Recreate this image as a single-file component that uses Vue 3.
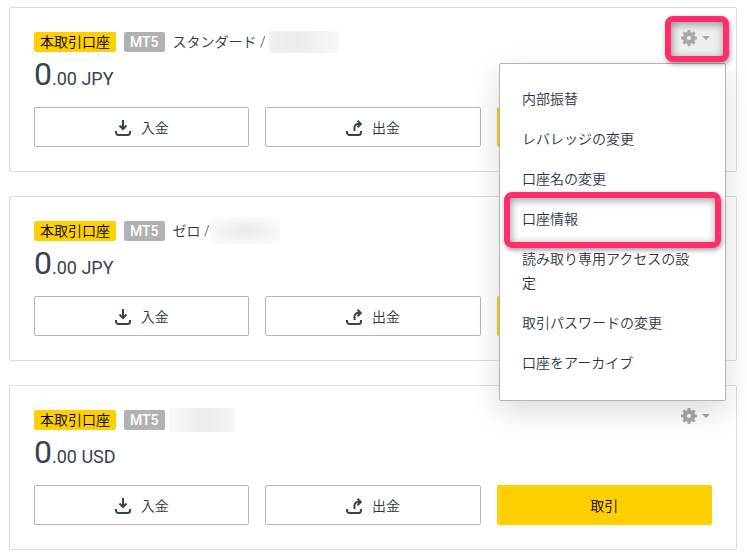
<script setup>
import { ref } from 'vue'

const accounts = [
  { id: 1, name: 'スタンダード /', currency: 'JPY', maskClass: 'mask-standard' },
  { id: 2, name: 'ゼロ /', currency: 'JPY', maskClass: 'mask-zero' },
  { id: 3, name: '', currency: 'USD', maskClass: 'mask-usd' },
]

const menuItems = [
  '内部振替',
  'レバレッジの変更',
  '口座名の変更',
  '口座情報',
  '読み取り専用アクセスの設定',
  '取引パスワードの変更',
  '口座をアーカイブ',
]

const openId = ref(1)
const marked = '口座情報'

function toggle(id) {
  openId.value = openId.value === id ? null : id
}
</script>

<template>
  <main class="accounts">
    <section v-for="account in accounts" :key="account.id" class="card">
      <div class="card-head">
        <span class="badge badge-real">本取引口座</span>
        <span class="badge badge-platform">MT5</span>
        <div class="account-name">
          <span v-if="account.name">{{ account.name }}</span>
          <span class="mask" :class="account.maskClass"></span>
        </div>

        <div class="settings" :class="{ open: openId === account.id }">
          <button
            class="settings-button"
            :class="{ marked: openId === account.id }"
            type="button"
            aria-label="設定"
            :aria-expanded="openId === account.id"
            @click="toggle(account.id)"
          >
            <svg class="gear" viewBox="0 0 16 16" aria-hidden="true">
              <path
                fill-rule="evenodd"
                d="M6.700 0h2.600l.4 2.200 1.200.5 1.900-1.300 1.800 1.800-1.300 1.900.5 1.200 2.200.4v2.600l-2.200.4-.5 1.200 1.300 1.900-1.800 1.800-1.900-1.300-1.200.5-.4 2.200H6.700l-.4-2.200-1.200-.5-1.900 1.300-1.800-1.800 1.300-1.900-.5-1.200L0 9.300V6.700l2.200-.4.5-1.200-1.300-1.900 1.800-1.800 1.900 1.300 1.200-.5zM8 5.900a2.100 2.100 0 1 0 0 4.200 2.100 2.100 0 0 0 0-4.200z"
              />
            </svg>
            <svg class="caret" viewBox="0 0 8 4" aria-hidden="true">
              <path d="M0 0h8L4 4z" />
            </svg>
          </button>

          <ul v-if="openId === account.id" class="menu">
            <li v-for="item in menuItems" :key="item">
              <a href="#" class="menu-link" :class="{ marked: item === marked }" @click.prevent>{{ item }}</a>
            </li>
          </ul>
        </div>
      </div>

      <div class="balance"><span class="balance-main">0</span>.00 {{ account.currency }}</div>

      <div class="actions">
        <button class="action" type="button">
          <svg class="action-icon" viewBox="0 0 16 17" aria-hidden="true">
            <path d="M8 1v9M4.500 6.500 8 10l3.500-3.500M1 12v1.500A2.500 2.500 0 0 0 3.500 16h9a2.500 2.500 0 0 0 2.500-2.500V12" />
          </svg>
          入金
        </button>
        <button class="action" type="button">
          <svg class="action-icon" viewBox="0 0 16 17" aria-hidden="true">
            <path d="M8.500 12V8.500A3.500 3.500 0 0 1 12 5h3M11.500 1.700 14.800 5l-3.300 3.300M1 12v1.500A2.500 2.500 0 0 0 3.500 16h9a2.500 2.500 0 0 0 2.500-2.500V12" />
          </svg>
          出金
        </button>
        <button class="action action-trade" type="button">取引</button>
      </div>
    </section>
  </main>
</template>

<style>
body {
  background: #fff;
}
</style>

<style scoped>
.accounts {
  display: flex;
  flex-direction: column;
  gap: 24px;
  padding: 7px 10px 6px 9px;
  font-family: Roboto, "Noto Sans CJK JP", sans-serif;
  font-size: 14px;
  font-weight: 400;
  line-height: 20px;
  color: #38424f;
}

.card {
  padding: 24px;
  border: 1px solid #dcdcdc;
  border-radius: 2px;
}

.card-head {
  display: flex;
  align-items: center;
  gap: 8px;
  height: 20px;
}

.badge {
  padding: 0 6px;
  border-radius: 2px;
  line-height: 20px;
  white-space: nowrap;
}

.badge-real {
  background: #ffcf01;
  color: #000;
  font-weight: 350;
}

.badge-platform {
  background: #b1b1b1;
  color: #fff;
  font-weight: 500;
}

.account-name,
.menu,
.action {
  color: #2b3542;
  font-weight: 350;
}

.account-name {
  display: flex;
  align-items: center;
  white-space: nowrap;
}

.mask {
  width: 70px;
  height: 22px;
  background: linear-gradient(90deg, #f1f1f1, #ececec 40%, #f8f8f8);
}

.mask-standard {
  margin-left: 3px;
}

.mask-zero {
  height: 26px;
  background: radial-gradient(ellipse at center, #e9e9e9, #fafafa 80%);
}

.mask-usd {
  width: 66px;
  height: 24px;
  margin-left: -4px;
  background: linear-gradient(90deg, #f8f8f8, #ececec 50%, #f3f5f7);
}

.settings {
  position: relative;
  margin-left: auto;
}

.settings.open {
  z-index: 2;
}

.settings-button {
  display: flex;
  align-items: center;
  gap: 5px;
  margin-bottom: 8px;
  padding: 2px;
  border: none;
  background: none;
  cursor: pointer;
}

.settings-button.marked {
  position: relative;
  z-index: 2;
}

.settings-button svg {
  fill: #a8a8a8;
}

.settings-button.marked svg {
  position: relative;
  z-index: 1;
}

.gear {
  width: 16px;
  height: 16px;
}

.caret {
  width: 8px;
  height: 4px;
}

.settings-button.marked::before,
.menu-link.marked::before {
  content: "";
  position: absolute;
  border: 6px solid #ff2d6b;
  border-radius: 8px;
  box-shadow: 1px 2px 5px rgba(0, 0, 0, 0.4), inset 1px 2px 8px rgba(0, 0, 0, 0.4);
  pointer-events: none;
}

.settings-button.marked::before {
  inset: -12px -17px -14px -14px;
  background: #eee;
}

.menu {
  position: absolute;
  z-index: 1;
  top: 35px;
  right: -14px;
  width: 181px;
  margin: 0;
  padding: 15px 22px 17px;
  border: 1px solid #b4b4b4;
  border-radius: 2px;
  background: #fff;
  box-shadow: 0 10px 30px rgba(0, 0, 0, 0.15);
  list-style: none;
}

.menu-link {
  position: relative;
  display: block;
  padding: 8px 0;
  line-height: 24px;
  color: inherit;
  text-decoration: none;
}

.menu-link.marked::before {
  inset: -7px -18px -9px;
}

.balance {
  margin: 2px 0 8px;
  font-size: 18px;
  line-height: 40px;
}

.balance-main {
  font-size: 32px;
}

.actions {
  display: grid;
  grid-template-columns: repeat(3, 1fr);
  gap: 16px;
}

.action {
  display: flex;
  align-items: center;
  justify-content: center;
  gap: 10px;
  height: 40px;
  padding: 0 16px;
  border: 1px solid #b4b4b4;
  border-radius: 2px;
  background: #fff;
  font-family: inherit;
  font-size: 14px;
  cursor: pointer;
}

.action-trade {
  border-color: #ffcf01;
  background: #ffcf01;
  color: #000;
}

.action-icon {
  width: 16px;
  height: 17px;
  fill: none;
  stroke: #38424f;
  stroke-width: 2;
}
</style>
